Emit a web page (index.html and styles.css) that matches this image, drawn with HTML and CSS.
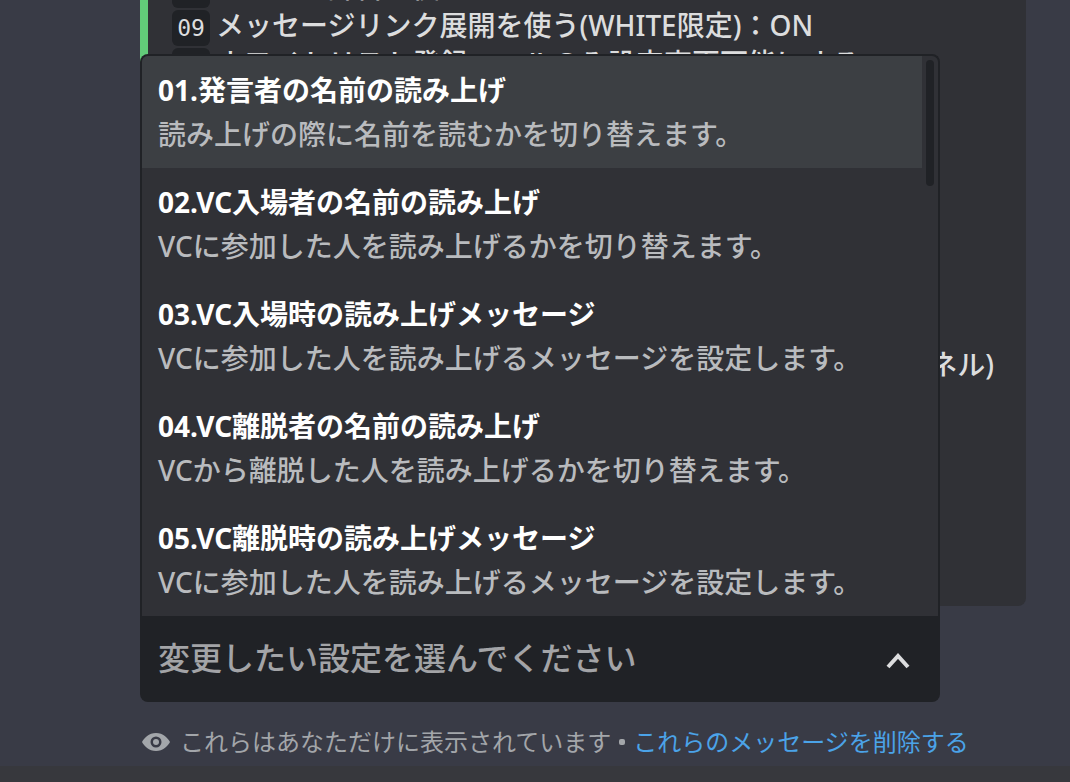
FILE: index.html
```
<!DOCTYPE html>
<html lang="ja">
<head>
  <meta charset="UTF-8" />
  <meta name="viewport" content="width=device-width, initial-scale=1.0"/>
  <title>読み上げ設定</title>
  <link rel="stylesheet" href="styles.css">
</head>
<body>
  <main class="chat">
    <section class="embed">
      <ul class="settings">
        <li><code>08</code><span>サーバー辞書を使う：ON</span></li>
        <li><code>09</code><span>メッセージリンク展開を使う(WHITE限定)：ON</span></li>
        <li><code>10</code><span>ホワイトリスト登録ロールのみ設定変更可能にする</span></li>
      </ul>
      <p class="channel">チャンネル)</p>
    </section>

    <div class="picker">
      <ul class="menu" role="listbox" aria-label="設定一覧">
        <li class="option active" role="option" aria-selected="true">
          <strong>01.発言者の名前の読み上げ</strong>
          <span>読み上げの際に名前を読むかを切り替えます。</span>
        </li>
        <li class="option" role="option">
          <strong>02.VC入場者の名前の読み上げ</strong>
          <span>VCに参加した人を読み上げるかを切り替えます。</span>
        </li>
        <li class="option" role="option">
          <strong>03.VC入場時の読み上げメッセージ</strong>
          <span>VCに参加した人を読み上げるメッセージを設定します。</span>
        </li>
        <li class="option" role="option">
          <strong>04.VC離脱者の名前の読み上げ</strong>
          <span>VCから離脱した人を読み上げるかを切り替えます。</span>
        </li>
        <li class="option" role="option">
          <strong>05.VC離脱時の読み上げメッセージ</strong>
          <span>VCに参加した人を読み上げるメッセージを設定します。</span>
        </li>
      </ul>
      <div class="scrollbar"></div>
      <select class="picker-select" aria-label="変更したい設定">
        <option>変更したい設定を選んでください</option>
      </select>
      <svg class="chevron" viewBox="0 0 24 16" aria-hidden="true">
        <path d="M2 14 L12 3 L22 14" fill="none" stroke="currentColor" stroke-width="4"/>
      </svg>
    </div>

    <footer class="notice">
      <svg class="eye" viewBox="0 0 28 20" aria-hidden="true">
        <path fill="currentColor" fill-rule="evenodd" d="M14 1C7 1 2 6 0 10c2 4 7 9 14 9s12-5 14-9C26 6 21 1 14 1zm0 14.500a5.500 5.500 0 1 1 0-11 5.500 5.500 0 0 1 0 11z"/>
        <circle cx="14" cy="10" r="3" fill="currentColor"/>
      </svg>
      <span>これらはあなただけに表示されています</span>
      <span class="dot"></span>
      <a href="#">これらのメッセージを削除する</a>
    </footer>
  </main>
  <div class="bottom-bar"></div>
</body>
</html>
```
FILE: styles.css
```
* {
  box-sizing: border-box;
}

body {
  display: flex;
  flex-direction: column;
  height: 100vh;
  margin: 0;
  background-color: #393b46;
  color: #dcddde;
  font-family: "Noto Sans", "Noto Sans CJK JP", sans-serif;
  font-size: 28px;
  font-weight: 500;
  overflow: hidden;
}

ul, p {
  margin: 0;
  padding: 0;
  list-style: none;
}

.chat {
  flex: 1;
  display: flex;
  flex-direction: column;
  justify-content: flex-end;
  min-height: 0;
  padding: 0 44px 6px 140px;
  overflow: hidden;
}

.embed {
  flex-shrink: 0;
  padding: 16px 32px 224px 24px;
  background-color: #303136;
  border-left: 8px solid #62cb79;
  border-radius: 8px;
}

.settings li {
  display: flex;
  align-items: center;
  gap: 6px;
  height: 38px;
  line-height: 32px;
  white-space: nowrap;
}

.settings span {
  padding-bottom: 6px;
}

.settings code {
  width: 38px;
  height: 36px;
  line-height: 36px;
  background-color: #202226;
  border-radius: 6px;
  font-family: "DejaVu Sans Mono", monospace;
  font-size: 23px;
  font-weight: 400;
  text-align: center;
}

.channel {
  margin-top: 261px;
  line-height: 36px;
  text-align: right;
}

.picker {
  position: relative;
  flex-shrink: 0;
  max-width: 800px;
  margin-top: 10px;
}

.menu {
  position: absolute;
  right: 0;
  bottom: 100%;
  left: 0;
  padding-right: 16px;
  background-color: #303136;
  border: 2px solid #202226;
  border-bottom: none;
  border-radius: 8px 8px 0 0;
  overflow: hidden;
}

.scrollbar {
  position: absolute;
  right: 6px;
  bottom: 516px;
  width: 8px;
  height: 126px;
  background-color: #202226;
  border-radius: 4px;
}

.option {
  display: flex;
  flex-direction: column;
  height: 112px;
  padding: 12px 16px;
  line-height: 44px;
  white-space: nowrap;
}

.option.active {
  background-color: #3c3f43;
}

.option strong {
  color: #fff;
  font-weight: 700;
}

.option span {
  color: #b9bbbe;
}

.picker-select {
  display: block;
  width: 100%;
  height: 86px;
  padding: 0 64px 4px 18px;
  appearance: none;
  background-color: #202226;
  border: none;
  border-radius: 0 0 8px 8px;
  color: #a3a4a7;
  font: inherit;
  font-size: 32px;
}

.chevron {
  position: absolute;
  top: 37px;
  right: 30px;
  width: 24px;
  height: 16px;
  pointer-events: none;
}

.notice {
  display: flex;
  flex-shrink: 0;
  align-items: center;
  height: 36px;
  margin-top: 22px;
  color: #a3a6aa;
  font-size: 24px;
  font-weight: 400;
  line-height: 36px;
  white-space: nowrap;
}

.eye {
  width: 28px;
  height: 20px;
  margin: 0 10px 0 2px;
}

.dot {
  width: 6px;
  height: 6px;
  margin: 0 8px;
  background-color: currentColor;
  border-radius: 2px;
}

.notice a {
  color: #4ba3e8;
  text-decoration: none;
}

.bottom-bar {
  height: 16px;
  background-color: #37383d;
}
```
